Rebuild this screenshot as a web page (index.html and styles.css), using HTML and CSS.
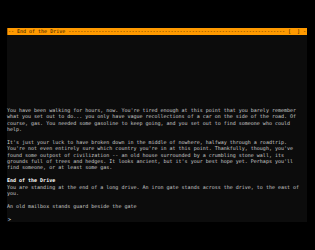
FILE: index.html
```html
<!DOCTYPE html>
<html>
<head>
<meta charset="utf-8">
<link rel="stylesheet" href="styles.css">
</head>
<body>
<div class="term">
  <div class="bar"><span class="bar-title">-- End of the Drive ------------------------------------------------------------------------ [  ] -</span></div>
  <div class="screen">
    <p>You have been walking for hours, now. You're tired enough at this point that you barely remember what you set out to do... you only have vague recollections of a car on the side of the road. Of course, gas. You needed some gasoline to keep going, and you set out to find someone who could help.</p>
    <p>It's just your luck to have broken down in the middle of nowhere, halfway through a roadtrip. You're not even entirely sure which country you're in at this point. Thankfully, though, you've found some outpost of civilization -- an old house surrounded by a crumbling stone wall, its grounds full of trees and hedges. It looks ancient, but it's your best hope yet. Perhaps you'll find someone, or at least some gas.</p>
    <p><b class="room">End of the Drive</b><br>You are standing at the end of a long drive. An iron gate stands across the drive, to the east of you.</p>
    <p>An old mailbox stands guard beside the gate</p>
    <div class="prompt">&gt;</div>
  </div>
</div>
</body>
</html>
```
FILE: styles.css
```css
html, body {
  margin: 0;
  padding: 0;
  background: #000;
}
body {
  font-family: "DejaVu Sans Mono", "Liberation Mono", monospace;
  font-size: 5px;
  line-height: 6.4px;
  color: #cccccc;
}
.term {
  margin: 28px 0 0 7px;
  width: 300px;
}
.bar {
  height: 7px;
  line-height: 7px;
  background: #ff9a00;
  color: #2e1800;
  white-space: pre;
  box-shadow: inset 1px 0 0 #b86a00;
}
.bar-title { padding-left: 1px; }
.screen {
  height: 187px;
  background: #0c0c0c;
  display: flex;
  flex-direction: column;
  justify-content: flex-end;
}
.screen p {
  margin: 0 0 6.4px 0;
  max-width: 98ch;
}
.room {
  color: #ffffff;
  font-weight: bold;
}
.prompt {
  color: #cfe0ff;
  padding-left: 1px;
}
```
